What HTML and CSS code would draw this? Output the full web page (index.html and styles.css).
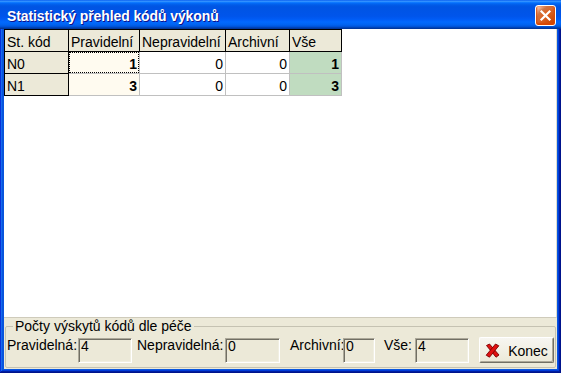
FILE: index.html
```html
<!DOCTYPE html>
<html lang="cs">
<head>
<meta charset="utf-8">
<title>Statistický přehled kódů výkonů</title>
<link rel="stylesheet" href="styles.css">
</head>
<body>
<div class="window">
  <div class="titlebar">
    <span class="title">Statistický přehled kódů výkonů</span>
    <button class="close" aria-label="Zavřít">
      <svg width="13" height="13" viewBox="0 0 13 13"><path d="M2.5 2.5 L10.5 10.5 M10.5 2.5 L2.5 10.5" stroke="#fff" stroke-width="2.2" stroke-linecap="square"/></svg>
    </button>
  </div>
  <div class="client">
    <div class="gridarea">
      <div class="grid">
        <div class="cell fixed">St. kód</div>
        <div class="cell fixed">Pravidelní</div>
        <div class="cell fixed">Nepravidelní</div>
        <div class="cell fixed">Archivní</div>
        <div class="cell fixed">Vše</div>

        <div class="cell fixed">N0</div>
        <div class="cell num cream bold focus">1</div>
        <div class="cell num">0</div>
        <div class="cell num">0</div>
        <div class="cell num green bold">1</div>

        <div class="cell fixed">N1</div>
        <div class="cell num cream bold">3</div>
        <div class="cell num">0</div>
        <div class="cell num">0</div>
        <div class="cell num green bold">3</div>
      </div>
    </div>
    <div class="panel">
      <fieldset class="group">
        <legend>Počty výskytů kódů dle péče</legend>
        <div class="row">
          <span class="lbl l1">Pravidelná:</span>
          <span class="field f1">4</span>
          <span class="lbl l2">Nepravidelná:</span>
          <span class="field f2">0</span>
          <span class="lbl l3">Archivní:</span>
          <span class="field f3">0</span>
          <span class="lbl l4">Vše:</span>
          <span class="field f4">4</span>
          <button class="btn">
            <svg width="15" height="15" viewBox="0 0 15 15">
              <path d="M1.5 2.5 L4.5 1 L14 12 L11 14.2 Z" fill="#e01010" stroke="#7a0000" stroke-width="0.9"/>
              <path d="M10.5 1 L13.8 2.8 L4.5 14.2 L1.2 12.2 Z" fill="#e01010" stroke="#7a0000" stroke-width="0.9"/>
            </svg>
            <span>Konec</span>
          </button>
        </div>
      </fieldset>
    </div>
  </div>
</div>
</body>
</html>
```

FILE: styles.css
```css
* { box-sizing: border-box; }
html, body { margin: 0; padding: 0; }
body {
  width: 561px;
  height: 373px;
  overflow: hidden;
  font-family: "Liberation Sans", Arial, sans-serif;
  font-size: 14px;
  color: #000;
  background: #fff;
}
.window {
  width: 561px;
  height: 373px;
  display: flex;
  flex-direction: column;
  background: #0855dd;
  box-shadow: inset -1px -1px #00138c, inset 1px 1px #0831d9,
              inset -2px -2px #001ea0, inset 2px 2px #166aee,
              inset -3px -3px #003bda, inset 3px 3px #0855dd;
}
.titlebar {
  height: 29px;
  flex: none;
  display: flex;
  align-items: flex-start;
  justify-content: space-between;
  padding: 0 5px 0 7px;
  background: linear-gradient(to bottom, #0058ee 0%, #3a93ff 4%, #288eff 6%, #127dff 8%, #036ffc 10%, #0262ee 14%, #0057e5 20%, #0054e3 24%, #0055eb 56%, #005bf5 66%, #026afe 76%, #0062ef 86%, #0052d6 92%, #0040ab 96%, #003092 100%);
}
.title {
  margin-top: 5px;
  padding-top: 3px;
  line-height: 16px;
  color: #fff;
  font-weight: bold;
  font-size: 14px;
  letter-spacing: -0.1px;
  text-shadow: 1px 1px #0f1089;
}
.close {
  margin-top: 5px;
  width: 21px;
  height: 21px;
  padding: 0;
  display: flex;
  align-items: center;
  justify-content: center;
  border: 1px solid #fff;
  border-radius: 3px;
  background: radial-gradient(circle at 90% 90%, #cc4600 0%, #dc6527 55%, #cd7546 70%, #ffccb2 90%, #fff 100%);
  box-shadow: inset 0 -1px 2px 1px #da4600;
}
.client {
  flex: 1;
  margin: 0 4px 4px 4px;
  background: #ece9d8;
  display: flex;
  flex-direction: column;
}
.gridarea {
  flex: 1;
  background: #fff;
  border-bottom: 1px solid #cfcbbb;
  border-right: 1px solid #dedbcc;
}
.grid {
  display: grid;
  grid-template-columns: 64px 71px 86px 64px 52px;
  grid-auto-rows: 22px;
  width: 338px;
  border-left: 1px solid #000;
  border-top: 1px solid #000;
}
.cell {
  position: relative;
  border-right: 1px solid #c0c0c0;
  border-bottom: 1px solid #c0c0c0;
  padding: 4px 2px 0 2px;
  line-height: 16px;
  white-space: nowrap;
  overflow: hidden;
  background: #fff;
}
.cell.fixed {
  background: #ece9d8;
  border-right-color: #000;
  border-bottom-color: #000;
}
.num { text-align: right; }
.bold { font-weight: bold; }
.cream { background: #fffbf0; }
.green { background: #c0dcc0; }
.focus::before {
  content: "";
  position: absolute;
  left: 0; top: 0; right: 0; bottom: 0;
  border: 1px dotted #000;
}
.panel {
  flex: none;
  height: 51px;
  padding: 1px 1px 0 1px;
}
.group {
  margin: 0;
  padding: 4px 1px 0 1px;
  height: 49px;
  border: 1px solid #c5c2b2;
  border-radius: 2px;
  min-inline-size: 0;
}
.group legend {
  margin-left: 6px;
  padding: 0 2px;
  line-height: 14px;
  color: #000;
}
.row {
  display: flex;
  align-items: flex-start;
  height: 26px;
}
.lbl {
  flex: none;
  line-height: 16px;
  white-space: nowrap;
}
.l1 { width: 71px; }
.l2 { width: 88px; margin-left: 5px; }
.l3 { width: 53px; margin-left: 10px; }
.l4 { width: 31px; margin-left: 9px; }
.field {
  flex: none;
  margin-top: 1px;
  height: 25px;
  padding: 1px 0 0 2px;
  line-height: 12px;
  background: #ece9d8;
  border: 1px solid;
  border-color: #aca899 #fff #fff #aca899;
  box-shadow: inset 1px 1px #716f64, inset -1px -1px #f1efe2;
}
.f1 { width: 54px; }
.f2 { width: 55px; }
.f3 { width: 32px; }
.f4 { width: 54px; }
.btn {
  flex: none;
  margin-left: 10px;
  width: 75px;
  height: 26px;
  display: flex;
  align-items: center;
  justify-content: center;
  gap: 8px;
  padding: 1px 0 0 0;
  font: inherit;
  color: #000;
  background: linear-gradient(#f7f6f1, #ece9d8);
  border: 1px solid;
  border-color: #fff #716f64 #716f64 #fff;
  border-radius: 2px;
  box-shadow: inset -1px -1px #aca899;
}
.btn svg { flex: none; }
```
